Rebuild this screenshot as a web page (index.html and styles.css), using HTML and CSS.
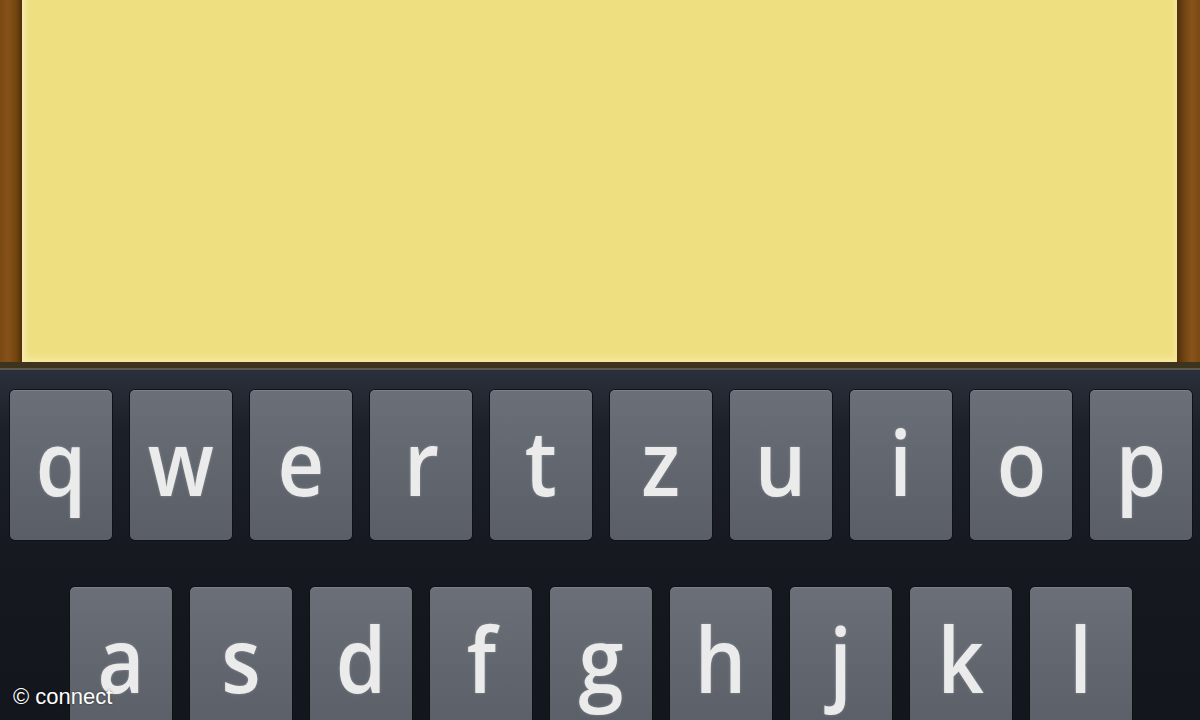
FILE: index.html
```html
<!DOCTYPE html>
<html lang="de">
<head>
<meta charset="utf-8">
<title>Notiz</title>
<link rel="stylesheet" href="styles.css">
</head>
<body>
<div class="screen">
  <div class="frame">
    <div class="note"></div>
  </div>
  <div class="keyboard">
    <div class="row row-1">
      <div class="key"><span>q</span></div>
      <div class="key"><span>w</span></div>
      <div class="key"><span>e</span></div>
      <div class="key"><span>r</span></div>
      <div class="key"><span>t</span></div>
      <div class="key"><span>z</span></div>
      <div class="key"><span>u</span></div>
      <div class="key"><span>i</span></div>
      <div class="key"><span>o</span></div>
      <div class="key"><span>p</span></div>
    </div>
    <div class="row row-2">
      <div class="key"><span>a</span></div>
      <div class="key"><span>s</span></div>
      <div class="key"><span>d</span></div>
      <div class="key"><span>f</span></div>
      <div class="key"><span>g</span></div>
      <div class="key"><span>h</span></div>
      <div class="key"><span>j</span></div>
      <div class="key"><span>k</span></div>
      <div class="key"><span>l</span></div>
    </div>
  </div>
  <div class="watermark">© connect</div>
</div>
</body>
</html>
```
FILE: styles.css
```css
html, body {
  margin: 0;
  padding: 0;
  background: #14171d;
}

.screen {
  position: relative;
  width: 1200px;
  height: 720px;
  overflow: hidden;
  font-family: "Open Sans", "Noto Sans", sans-serif;
}

.frame {
  height: 362px;
  padding: 0 23px 0 22px;
  background:
    linear-gradient(90deg, #7a4812 0, #86521a 8px, #744510 16px, #4d300c 22px, #4d300c 1177px, #6e4312 1184px, #88531b 1192px, #7a4812 1200px);
}

.note {
  height: 100%;
  background: #eedf80;
  box-shadow:
    inset 7px 0 4px -3px #f8eaa8,
    inset -5px 0 4px -3px #f6e6a2,
    inset 0 -10px 6px -6px #f6e9a0;
}

.keyboard {
  height: 358px;
  border-top: 6px solid #3d341e;
  background: linear-gradient(180deg, #5c5a50 0, #5c5a50 2px, #2a303b 2px, #1c2029 60px, #15181f 200px, #13161c 100%);
}

.row {
  display: flex;
  gap: 18px;
}

.row-1 {
  padding: 22px 0 0 10px;
}

.row-2 {
  padding: 47px 0 0 70px;
}

.key {
  box-sizing: border-box;
  width: 102px;
  height: 150px;
  border-radius: 5px;
  background: linear-gradient(180deg, #6a6f78 0, #62676f 50%, #5a5f67 100%);
  box-shadow: inset 0 1px 0 rgba(255,255,255,0.12), 0 0 0 1px #0f1116;
  display: flex;
  justify-content: center;
}

.key span {
  display: block;
  color: #ebebeb;
  font-size: 90px;
  font-weight: 600;
  line-height: 1;
  margin-top: 26px;
  text-shadow: 0 0 3px rgba(255,255,255,0.25);
  transform: scaleX(0.9);
}

.watermark {
  position: absolute;
  left: 13px;
  bottom: 10px;
  font-family: "Liberation Sans", Arial, sans-serif;
  font-size: 22px;
  color: #ffffff;
  text-shadow: 0 0 2px rgba(0,0,0,0.6);
}
```
